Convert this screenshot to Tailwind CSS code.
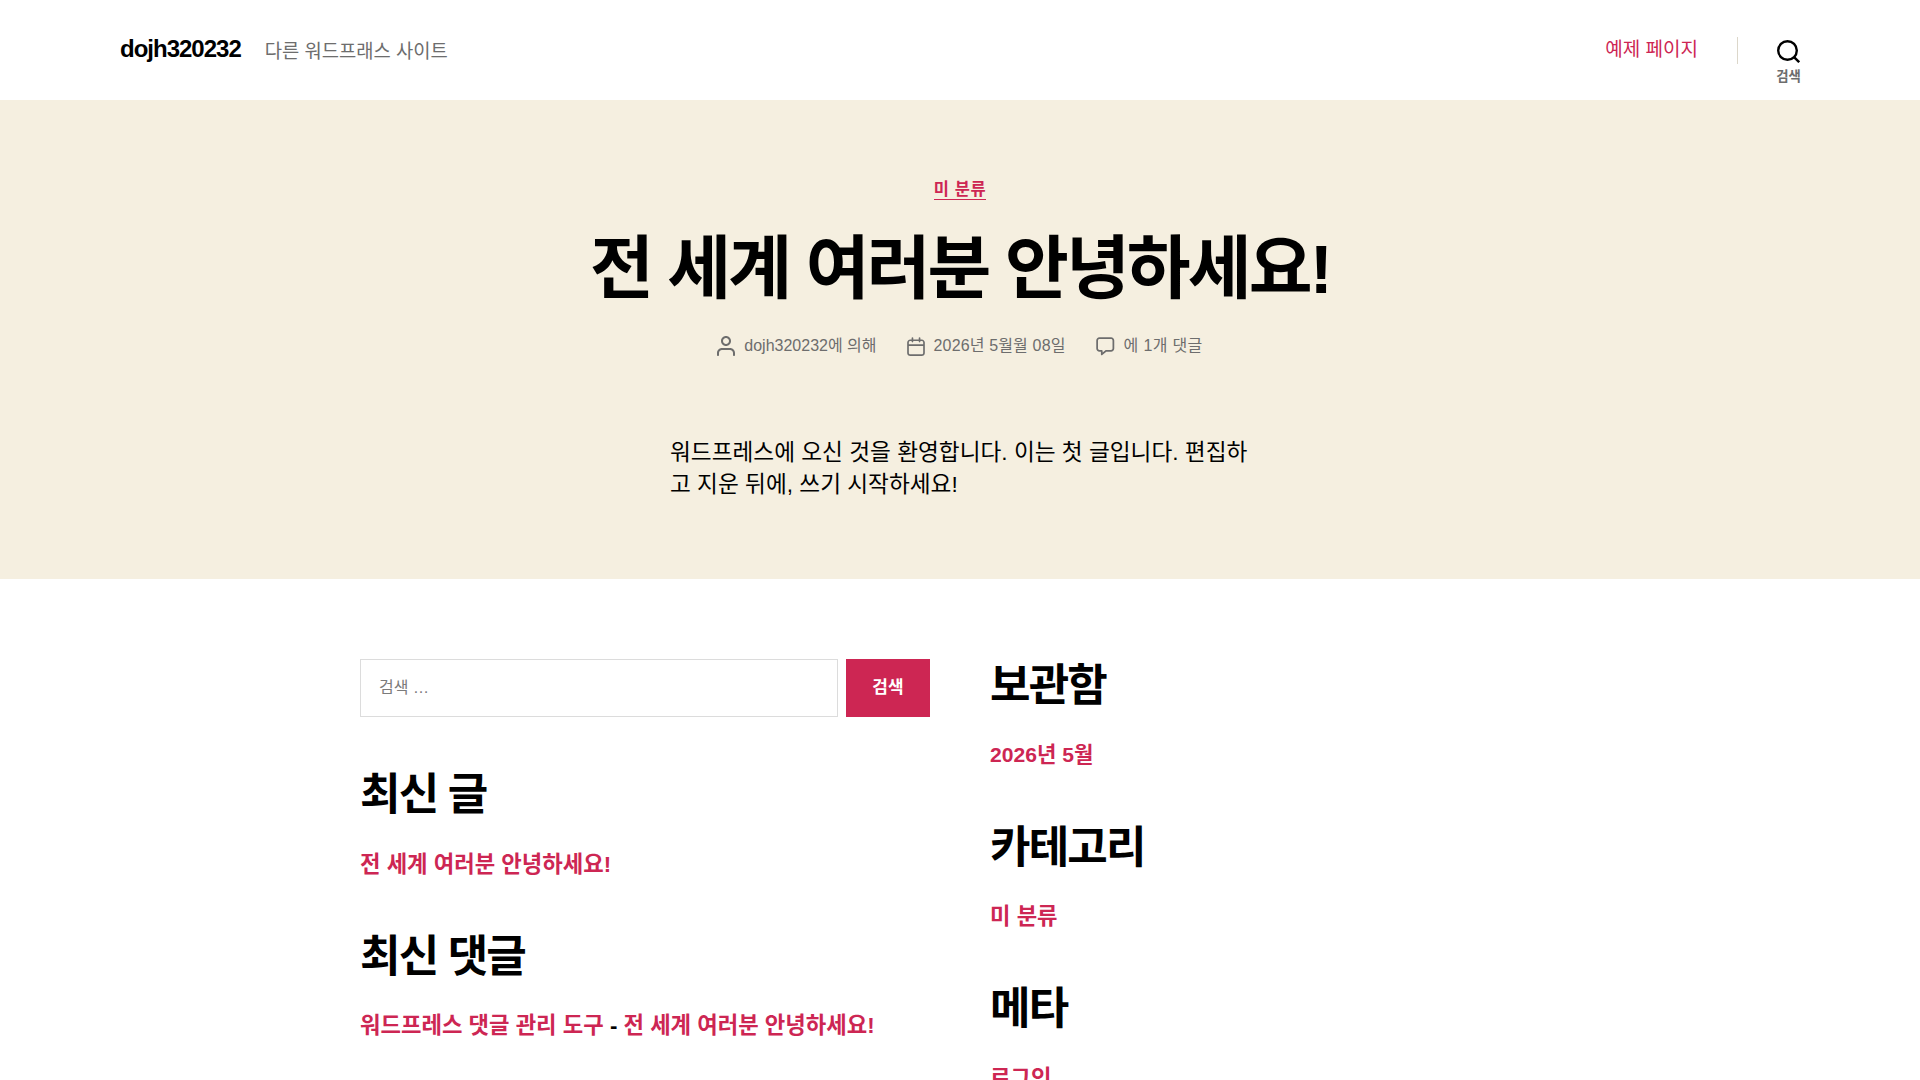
<!DOCTYPE html>
<html lang="ko">
<head>
  <meta charset="UTF-8">
  <title>dojh320232</title>
  <script src="https://cdn.jsdelivr.net/npm/@tailwindcss/browser@4"></script>
</head>
<body class="bg-white text-black font-['Liberation_Sans','Noto_Sans_CJK_KR',sans-serif] h-[1080px] overflow-hidden">
  <!-- Header -->
  <header class="h-[100px] px-[120px] flex items-center justify-between">
    <div class="flex items-baseline gap-6">
      <a href="#" class="text-[24px] font-bold tracking-[-0.0415em] -translate-y-px">dojh320232</a>
      <span class="text-[18.75px] text-[#6d6d6d]">다른 워드프래스 사이트</span>
    </div>
    <div class="flex items-center h-full">
      <a href="#" class="text-[19px] text-[#cd2653] mr-10 translate-x-px">예제 페이지</a>
      <div class="w-px h-[27px] bg-[#dcd7ca]"></div>
      <button class="ml-[39px] self-start mt-[40px] flex flex-col items-center w-[23px]">
        <svg class="w-[23px] h-[23px]" viewBox="0 0 23 23" fill="none" stroke="#000" stroke-width="2.4">
          <circle cx="10.5" cy="10.5" r="9.3"></circle>
          <path d="M17.3 17.3 L22.2 22.2"></path>
        </svg>
        <span class="text-[13.4px] leading-[18px] font-bold text-[#6d6d6d] mt-[5px] whitespace-nowrap">검색</span>
      </button>
    </div>
  </header>

  <!-- Post hero -->
  <section class="h-[479px] bg-[#f5efe0] flex flex-col items-center pt-[80px]">
    <a href="#" class="text-[16.5px] leading-[19px] font-bold text-[#cd2653] border-b border-[#cd2653] tracking-[0.036em]">미 분류</a>
    <h1 class="text-[69.4px] leading-[80px] font-bold tracking-[-0.0415em] mt-[29px]">전 세계 여러분 안녕하세요!</h1>
    <div class="flex items-center gap-[30px] text-[16px] text-[#6d6d6d] mt-[25px] leading-[24px]">
      <span class="flex items-center gap-[9px]">
        <svg class="w-[18px] h-[20px]" viewBox="0 0 18 20" fill="#6d6d6d"><path d="M18,19 C18,19.5522847 17.5522847,20 17,20 C16.4477153,20 16,19.5522847 16,19 L16,17 C16,15.3431458 14.6568542,14 13,14 L5,14 C3.34314575,14 2,15.3431458 2,17 L2,19 C2,19.5522847 1.55228475,20 1,20 C0.44771525,20 0,19.5522847 0,19 L0,17 C0,14.2385763 2.23857625,12 5,12 L13,12 C15.7614237,12 18,14.2385763 18,17 L18,19 Z M9,10 C6.23857625,10 4,7.76142375 4,5 C4,2.23857625 6.23857625,0 9,0 C11.7614237,0 14,2.23857625 14,5 C14,7.76142375 11.7614237,10 9,10 Z M9,8 C10.6568542,8 12,6.65685425 12,5 C12,3.34314575 10.6568542,2 9,2 C7.34314575,2 6,3.34314575 6,5 C6,6.65685425 7.34314575,8 9,8 Z"></path></svg>
        dojh320232에 의해
      </span>
      <span class="flex items-center gap-[9px] tracking-[0.15px]">
        <svg class="w-[18px] h-[19px]" viewBox="0 0 18 19" fill="#6d6d6d"><path d="M4.60069444,4.09375 L3.25,4.09375 C2.47334957,4.09375 1.84375,4.72334957 1.84375,5.5 L1.84375,7.26736111 L16.15625,7.26736111 L16.15625,5.5 C16.15625,4.72334957 15.5266504,4.09375 14.75,4.09375 L13.3993056,4.09375 L13.3993056,4.55555556 C13.3993056,5.02154581 13.0215458,5.39930556 12.5555556,5.39930556 C12.0895653,5.39930556 11.7118056,5.02154581 11.7118056,4.55555556 L11.7118056,4.09375 L6.28819444,4.09375 L6.28819444,4.55555556 C6.28819444,5.02154581 5.9104347,5.39930556 5.44444444,5.39930556 C4.97845419,5.39930556 4.60069444,5.02154581 4.60069444,4.55555556 L4.60069444,4.09375 Z M6.28819444,2.40625 L11.7118056,2.40625 L11.7118056,1 C11.7118056,0.534009742 12.0895653,0.15625 12.5555556,0.15625 C13.0215458,0.15625 13.3993056,0.534009742 13.3993056,1 L13.3993056,2.40625 L14.75,2.40625 C16.4586309,2.40625 17.84375,3.79136906 17.84375,5.5 L17.84375,15.875 C17.84375,17.5836309 16.4586309,18.96875 14.75,18.96875 L3.25,18.96875 C1.54136906,18.96875 0.15625,17.5836309 0.15625,15.875 L0.15625,5.5 C0.15625,3.79136906 1.54136906,2.40625 3.25,2.40625 L4.60069444,2.40625 L4.60069444,1 C4.60069444,0.534009742 4.97845419,0.15625 5.44444444,0.15625 C5.9104347,0.15625 6.28819444,0.534009742 6.28819444,1 L6.28819444,2.40625 Z M1.84375,8.95486111 L1.84375,15.875 C1.84375,16.6516504 2.47334957,17.28125 3.25,17.28125 L14.75,17.28125 C15.5266504,17.28125 16.15625,16.6516504 16.15625,15.875 L16.15625,8.95486111 L1.84375,8.95486111 Z"></path></svg>
        2026년 5월월 08일
      </span>
      <span class="flex items-center gap-[9px] tracking-[0.35px]">
        <svg class="w-[19px] h-[19px]" viewBox="0 0 19 19" fill="#6d6d6d"><path d="M9.43016863,13.2235931 C9.58624731,13.094699 9.7823475,13.0241935 9.98476849,13.0241935 L15.0564516,13.0241935 C15.8581553,13.0241935 16.5080645,12.3742843 16.5080645,11.5725806 L16.5080645,3.44354839 C16.5080645,2.64184472 15.8581553,1.99193548 15.0564516,1.99193548 L3.44354839,1.99193548 C2.64184472,1.99193548 1.99193548,2.64184472 1.99193548,3.44354839 L1.99193548,11.5725806 C1.99193548,12.3742843 2.64184472,13.0241935 3.44354839,13.0241935 L5.76612903,13.0241935 C6.24715123,13.0241935 6.63709677,13.4141391 6.63709677,13.8951613 L6.63709677,15.5301903 L9.43016863,13.2235931 Z M3.44354839,14.766129 C1.67980032,14.766129 0.25,13.3363287 0.25,11.5725806 L0.25,3.44354839 C0.25,1.67980032 1.67980032,0.25 3.44354839,0.25 L15.0564516,0.25 C16.8201997,0.25 18.25,1.67980032 18.25,3.44354839 L18.25,11.5725806 C18.25,13.3363287 16.8201997,14.766129 15.0564516,14.766129 L10.2979143,14.766129 L6.32072889,18.0506004 C5.75274472,18.5196577 4.89516129,18.1156602 4.89516129,17.3790323 L4.89516129,14.766129 L3.44354839,14.766129 Z"></path></svg>
        에 1개 댓글
      </span>
    </div>
    <p class="w-[580px] text-[22.65px] leading-[31.5px] mt-[79px]">워드프레스에 오신 것을 환영합니다. 이는 첫 글입니다. 편집하고 지운 뒤에, 쓰기 시작하세요!</p>
  </section>

  <!-- Widgets -->
  <section class="w-[1200px] ml-[360px] grid grid-cols-2 gap-x-[60px] pt-[80px]">
    <div>
      <form class="flex gap-2 mb-[53px]">
        <input type="search" placeholder="검색 …" class="flex-1 h-[58px] border border-[#dcdcdc] px-[18px] text-[16px] placeholder:text-[#7b7b7b]">
        <button type="button" class="w-[84px] h-[58px] bg-[#cd2653] text-white text-[17px] font-bold">검색</button>
      </form>
      <div class="h-[161.6px]">
        <h2 class="text-[44px] leading-[50px] font-bold tracking-[-0.0415em] mb-[28.5px]">최신 글</h2>
        <a href="#" class="text-[22.25px] leading-[32px] font-bold text-[#cd2653]">전 세계 여러분 안녕하세요!</a>
      </div>
      <div class="h-[161.6px]">
        <h2 class="text-[44px] leading-[50px] font-bold tracking-[-0.0415em] mb-[28.5px]">최신 댓글</h2>
        <p class="text-[22.25px] leading-[32px] font-bold"><a href="#" class="text-[#cd2653]">워드프레스 댓글 관리 도구</a> - <a href="#" class="text-[#cd2653]">전 세계 여러분 안녕하세요!</a></p>
      </div>
    </div>
    <div class="pt-[2px]">
      <div class="h-[161.6px]">
        <h2 class="text-[44px] leading-[50px] font-bold tracking-[-0.0415em] mb-[28px]">보관함</h2>
        <a href="#" class="text-[21.1px] leading-[32px] font-bold text-[#cd2653]">2026년 5월</a>
      </div>
      <div class="h-[161.6px]">
        <h2 class="text-[44px] leading-[50px] font-bold tracking-[-0.0415em] mb-[28.5px]">카테고리</h2>
        <a href="#" class="text-[22.25px] leading-[32px] font-bold text-[#cd2653]">미 분류</a>
      </div>
      <div class="h-[90px]">
        <h2 class="text-[44px] leading-[50px] font-bold tracking-[-0.0415em] mb-[28.5px]">메타</h2>
        <a href="#" class="text-[22.25px] leading-[32px] font-bold text-[#cd2653]">로그인</a>
      </div>
    </div>
  </section>
</body>
</html>
